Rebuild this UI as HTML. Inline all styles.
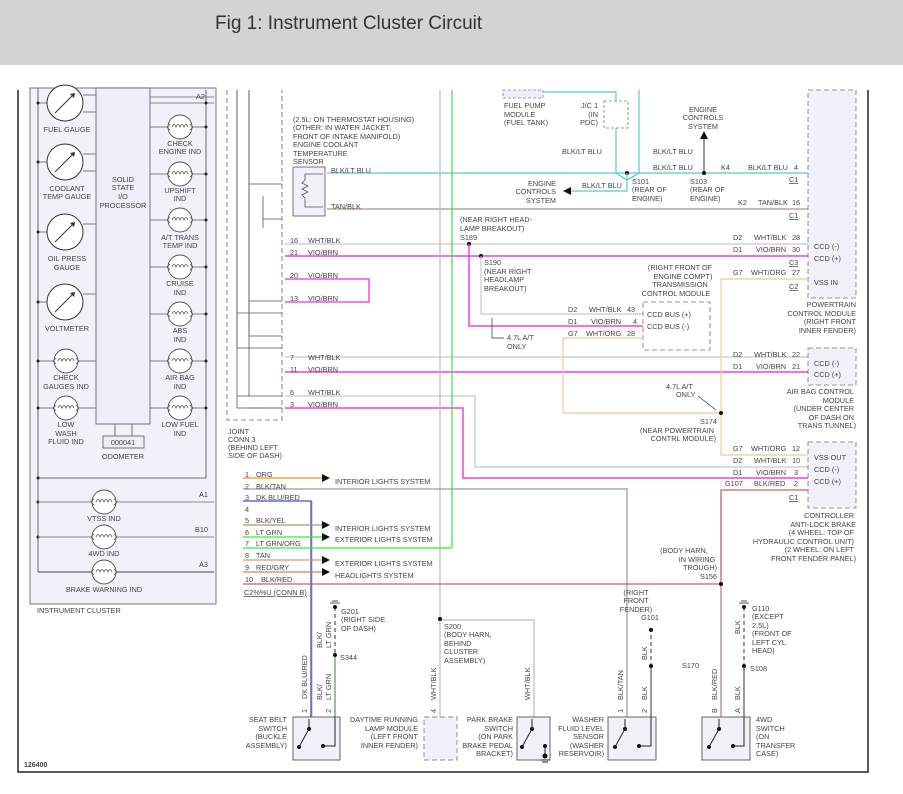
<!DOCTYPE html>
<html><head><meta charset="utf-8"><style>
body{margin:0;background:#fff;width:903px;height:794px;overflow:hidden;font-family:"Liberation Sans",sans-serif}
.hdr{position:absolute;left:0;top:0;width:903px;height:65px;background:#d3d3d3}
.hdr span{position:absolute;left:215px;top:13px;font-size:19px;color:#333}
svg{position:absolute;left:0;top:0}
text{font-family:"Liberation Sans",sans-serif;font-size:7.3px;fill:#444}
</style></head><body>
<div class="hdr"><span>Fig 1: Instrument Cluster Circuit</span></div>
<svg width="903" height="794" viewBox="0 0 903 794">
<defs>
<g id="lamp"><circle r="12" fill="#fff" stroke="#555" stroke-width="0.9"/><path d="M-8,0 q2,-5 4,0 q2,-5 4,0 q2,-5 4,0 q2,-5 4,0 M-10,-3 l-3,3 l3,3 M10,-3 l3,3 l-3,3" fill="none" stroke="#555" stroke-width="0.8"/></g>
<g id="gauge"><circle r="18" fill="#fff" stroke="#333" stroke-width="1"/><path d="M-10,10 L9,-9" stroke="#333" stroke-width="1"/><path d="M10,-10 l-5,1 l4,4z" fill="#333"/></g>
<g id="sw"><circle cx="-12" cy="14" r="2" fill="#111"/><circle cx="-2" cy="-4" r="2" fill="#111"/><path d="M-12,14 L-1,-6 M-2,-4 L-2,-14" stroke="#222" stroke-width="1"/></g>
</defs>
<!-- border -->
<path d="M18,90 V772 H868 V90" fill="none" stroke="#222" stroke-width="1.5"/>
<!-- instrument cluster -->
<rect x="30" y="88" width="186" height="516" fill="#f1f1fa" stroke="#777" stroke-width="1"/>
<path d="M38,88 V478 H206 V90" fill="none" stroke="#444" stroke-width="0.8"/>
<path d="M38,478 V572" fill="none" stroke="#444" stroke-width="0.8"/>
<rect x="96" y="88" width="54" height="336" fill="#eeeefa" stroke="#555" stroke-width="0.8"/>
<text x="123" y="182" text-anchor="middle">SOLID</text><text x="123" y="190" text-anchor="middle">STATE</text><text x="123" y="199" text-anchor="middle">I/O</text><text x="123" y="208" text-anchor="middle">PROCESSOR</text>
<path d="M150,97 H214 M150,103 H214" stroke="#666" stroke-width="0.8"/><text x="196" y="99">A2</text>
<path d="M115,424 V436 M132,424 V436" stroke="#555" stroke-width="0.8"/>
<rect x="103" y="436" width="41" height="12" fill="#eeeefa" stroke="#555" stroke-width="0.8"/><text x="123" y="445" text-anchor="middle">000041</text>
<text x="123" y="459" text-anchor="middle">ODOMETER</text>
<g stroke="#555" stroke-width="0.8">
<path d="M38,103 H47 M83,95 H96 M83,112 H96 M38,162 H47 M83,154 H96 M83,171 H96 M38,232 H47 M83,224 H96 M38,302 H47 M83,294 H96 M38,361 H96 M38,408 H96"/>
<path d="M150,127 H206 M150,174 H206 M150,220 H206 M150,267 H206 M150,314 H206 M150,361 H206 M150,408 H206"/>
</g>
<g fill="#222"><circle cx="38" cy="103" r="1.5"/><circle cx="38" cy="162" r="1.5"/><circle cx="38" cy="232" r="1.5"/><circle cx="38" cy="302" r="1.5"/><circle cx="38" cy="361" r="1.5"/><circle cx="38" cy="408" r="1.5"/><circle cx="38" cy="478" r="1.5"/><circle cx="38" cy="502" r="1.5"/><circle cx="38" cy="537" r="1.5"/>
<circle cx="206" cy="103" r="1.5"/><circle cx="206" cy="127" r="1.5"/><circle cx="206" cy="174" r="1.5"/><circle cx="206" cy="220" r="1.5"/><circle cx="206" cy="267" r="1.5"/><circle cx="206" cy="314" r="1.5"/><circle cx="206" cy="361" r="1.5"/><circle cx="206" cy="408" r="1.5"/></g>
<use href="#gauge" x="65" y="103"/><use href="#gauge" x="65" y="162"/><use href="#gauge" x="65" y="232"/><use href="#gauge" x="65" y="302"/>
<text x="67" y="132" text-anchor="middle">FUEL GAUGE</text>
<text x="67" y="191" text-anchor="middle">COOLANT</text><text x="67" y="199" text-anchor="middle">TEMP GAUGE</text>
<text x="67" y="261" text-anchor="middle">OIL PRESS</text><text x="67" y="270" text-anchor="middle">GAUGE</text>
<text x="67" y="331" text-anchor="middle">VOLTMETER</text>
<use href="#lamp" x="66" y="361"/><use href="#lamp" x="66" y="408"/>
<text x="66" y="380" text-anchor="middle">CHECK</text><text x="66" y="389" text-anchor="middle">GAUGES IND</text>
<text x="66" y="427" text-anchor="middle">LOW</text><text x="66" y="436" text-anchor="middle">WASH</text><text x="66" y="444" text-anchor="middle">FLUID IND</text>
<use href="#lamp" x="180" y="127"/><use href="#lamp" x="180" y="174"/><use href="#lamp" x="180" y="220"/><use href="#lamp" x="180" y="267"/><use href="#lamp" x="180" y="314"/><use href="#lamp" x="180" y="361"/><use href="#lamp" x="180" y="408"/>
<g text-anchor="middle"><text x="180" y="146">CHECK</text><text x="180" y="154">ENGINE IND</text>
<text x="180" y="193">UPSHIFT</text><text x="180" y="201">IND</text>
<text x="180" y="240">A/T TRANS</text><text x="180" y="248">TEMP IND</text>
<text x="180" y="286">CRUISE</text><text x="180" y="295">IND</text>
<text x="180" y="333">ABS</text><text x="180" y="342">IND</text>
<text x="180" y="380">AIR BAG</text><text x="180" y="389">IND</text>
<text x="180" y="427">LOW FUEL</text><text x="180" y="436">IND</text></g>
<g stroke="#888" stroke-width="0.9"><path d="M38,502 H214 M38,537 H214"/></g><path d="M38,572 H214" stroke="#444" stroke-width="0.9"/>
<use href="#lamp" x="104" y="502"/><use href="#lamp" x="104" y="537"/><use href="#lamp" x="104" y="572"/>
<text x="104" y="521" text-anchor="middle">VTSS IND</text><text x="104" y="556" text-anchor="middle">4WD IND</text><text x="104" y="592" text-anchor="middle">BRAKE WARNING IND</text>
<text x="199" y="497">A1</text><text x="195" y="532">B10</text><text x="199" y="567">A3</text>
<text x="37" y="613">INSTRUMENT CLUSTER</text>
<text x="24" y="767" style="font-weight:bold;font-size:7px">126400</text>
<!-- joint conn -->
<path d="M227,90 V420 H282 V90" fill="none" stroke="#666" stroke-dasharray="5,3" stroke-width="0.8"/>
<path d="M237,90 V348 H282 M249,90 V336 H282 M237,313 H282 M249,184 H282 M249,301 H282 M263,196 V228 M263,219 H282 M249,408 H282 M237,396 H282 M249,396" fill="none" stroke="#555" stroke-width="0.8"/>
<path d="M237,90 V408 H282 M249,90 V396" fill="none" stroke="#555" stroke-width="0.8"/>
<text x="228" y="434">JOINT</text><text x="228" y="442">CONN 3</text><text x="228" y="450">(BEHIND LEFT</text><text x="228" y="458">SIDE OF DASH)</text>
<!-- sensor -->
<text x="293" y="122">(2.5L: ON THERMOSTAT HOUSING)</text><text x="293" y="130">(OTHER: IN WATER JACKET,</text><text x="293" y="139">FRONT OF INTAKE MANIFOLD)</text><text x="293" y="147">ENGINE COOLANT</text><text x="293" y="156">TEMPERATURE</text><text x="293" y="164">SENSOR</text>
<rect x="293" y="167" width="32" height="49" fill="#f1f1fa" stroke="#555" stroke-width="0.8"/>
<path d="M323,174 H305 V180 l-3,3 l6,3 l-6,3 l6,3 l-6,3 l3,3 V207 H323" fill="none" stroke="#555" stroke-width="0.8"/>
<!-- main wires -->
<path d="M327,173 H627 M627,173 H808" stroke="#5cc8cc" stroke-width="1.2" fill="none"/>
<path d="M327,209 H808" stroke="#a89878" stroke-width="1.2"/>
<text x="331" y="173">BLK/LT BLU</text><text x="331" y="209">TAN/BLK</text>
<path d="M285,244 H808" stroke="#c8c8c8" stroke-width="1.2"/>
<path d="M285,256 H808" stroke="#f040e0" stroke-width="1.5"/>
<path d="M285,279 H369 V302 H285" fill="none" stroke="#f050e0" stroke-width="1.5"/>
<path d="M285,357 H808" stroke="#c8c8c8" stroke-width="1.2"/>
<path d="M285,372 H808" stroke="#f040e0" stroke-width="1.5"/>
<path d="M285,396 H475 V467 H808" fill="none" stroke="#c8c8c8" stroke-width="1.2"/>
<path d="M285,408 H463 V478 H808" fill="none" stroke="#f040e0" stroke-width="1.5"/>
<g>
<text x="290" y="243">16</text><text x="308" y="243">WHT/BLK</text><text x="290" y="255">21</text><text x="308" y="255">VIO/BRN</text>
<text x="290" y="278">20</text><text x="308" y="278">VIO/BRN</text><text x="290" y="301">13</text><text x="308" y="301">VIO/BRN</text>
<text x="290" y="360">7</text><text x="308" y="360">WHT/BLK</text><text x="290" y="372">11</text><text x="308" y="372">VIO/BRN</text>
<text x="290" y="395">6</text><text x="308" y="395">WHT/BLK</text><text x="290" y="407">3</text><text x="308" y="407">VIO/BRN</text></g>
<!-- verticals -->
<path d="M440,90 V620 M440,620 H534 V717 M440,620 V717" fill="none" stroke="#bbb" stroke-width="1.2"/>
<path d="M452,90 V548" stroke="#44dd44" stroke-width="1.2"/>
<!-- top right -->
<rect x="503" y="90" width="40" height="8" fill="#eeeefa" stroke="#888" stroke-dasharray="3,2" stroke-width="0.8"/>
<text x="504" y="108">FUEL PUMP</text><text x="504" y="117">MODULE</text><text x="504" y="125">(FUEL TANK)</text>
<path d="M543,92 H616 V173 L627,180 L639,173 V90" fill="none" stroke="#5cc8cc" stroke-width="1.2"/>
<rect x="604" y="101" width="24" height="27" fill="#fff" stroke="#777" stroke-dasharray="3,2" stroke-width="0.8"/>
<text x="598" y="108" text-anchor="end">J/C 1</text><text x="598" y="117" text-anchor="end">(IN</text><text x="598" y="125" text-anchor="end">PDC)</text>
<text x="562" y="154">BLK/LT BLU</text><text x="653" y="154">BLK/LT BLU</text><text x="653" y="170">BLK/LT BLU</text>
<text x="721" y="170">K4</text><text x="748" y="170">BLK/LT BLU</text><text x="794" y="170">4</text>
<text x="789" y="182" text-decoration="underline">C1</text><text x="814" y="179">SENS GND</text>
<path d="M704,173 V135" stroke="#333" stroke-width="1"/><path d="M704,131 l-4,8 h8z" fill="#111"/>
<text x="703" y="112" text-anchor="middle">ENGINE</text><text x="703" y="120" text-anchor="middle">CONTROLS</text><text x="703" y="129" text-anchor="middle">SYSTEM</text>
<circle cx="627" cy="173" r="2" fill="#111"/><circle cx="704" cy="173" r="2" fill="#111"/>
<path d="M627,173 V191 H570" fill="none" stroke="#5cc8cc" stroke-width="1.2"/><path d="M563,191 l8,-4 v8z" fill="#111"/>
<text x="582" y="188">BLK/LT BLU</text>
<text x="556" y="186" text-anchor="end">ENGINE</text><text x="556" y="194" text-anchor="end">CONTROLS</text><text x="556" y="203" text-anchor="end">SYSTEM</text>
<text x="632" y="184">S101</text><text x="632" y="192">(REAR OF</text><text x="632" y="201">ENGINE)</text>
<text x="690" y="184">S103</text><text x="690" y="192">(REAR OF</text><text x="690" y="201">ENGINE)</text>
<text x="738" y="205">K2</text><text x="758" y="205">TAN/BLK</text><text x="792" y="205">16</text>
<text x="789" y="218" text-decoration="underline">C1</text><text x="814" y="214">ECT</text>
<!-- PCM -->
<rect x="808" y="90" width="48" height="208" fill="#f1f1fa" stroke="#777" stroke-dasharray="5,3" stroke-width="0.8"/>
<text x="733" y="240">D2</text><text x="754" y="240">WHT/BLK</text><text x="792" y="240">28</text>
<text x="733" y="252">D1</text><text x="756" y="252">VIO/BRN</text><text x="792" y="252">30</text>
<text x="789" y="265" text-decoration="underline">C3</text>
<text x="814" y="249">CCD (-)</text><text x="814" y="261">CCD (+)</text>
<text x="733" y="275">G7</text><text x="751" y="275">WHT/ORG</text><text x="792" y="275">27</text>
<text x="789" y="289" text-decoration="underline">C2</text><text x="814" y="285">VSS IN</text>
<g text-anchor="end"><text x="856" y="307">POWERTRAIN</text><text x="856" y="316">CONTROL MODULE</text><text x="856" y="324">(RIGHT FRONT</text><text x="856" y="333">INNER FENDER)</text></g>
<path d="M808,279 H721 V455 H808" fill="none" stroke="#f5c89a" stroke-width="1.2"/>
<!-- S189 S190 -->
<text x="460" y="222">(NEAR RIGHT HEAD-</text><text x="460" y="231">LAMP BREAKOUT)</text><text x="460" y="240">S189</text>
<circle cx="469" cy="244" r="2" fill="#111"/><circle cx="481" cy="256" r="2" fill="#111"/>
<path d="M469,244 V326 H643" fill="none" stroke="#f040e0" stroke-width="1.5"/>
<path d="M481,256 V314 H643" fill="none" stroke="#c8c8c8" stroke-width="1.2"/>
<text x="484" y="265">S190</text><text x="484" y="274">(NEAR RIGHT</text><text x="484" y="282">HEADLAMP</text><text x="484" y="291">BREAKOUT)</text>
<path d="M492,318 V338 H504" fill="none" stroke="#333" stroke-width="0.7"/><text x="507" y="340">4.7L A/T</text><text x="507" y="349">ONLY</text>
<rect x="643" y="302" width="67" height="48" fill="#fff" stroke="#777" stroke-dasharray="5,3" stroke-width="0.8"/>
<text x="647" y="317">CCD BUS (+)</text><text x="647" y="329">CCD BUS (-)</text>
<g text-anchor="middle"><text x="680" y="270">(RIGHT FRONT OF</text><text x="683" y="279">ENGINE COMPT)</text><text x="680" y="287">TRANSMISSION</text><text x="676" y="296">CONTROL MODULE</text></g>
<text x="568" y="312">D2</text><text x="589" y="312">WHT/BLK</text><text x="627" y="312">43</text>
<text x="568" y="324">D1</text><text x="591" y="324">VIO/BRN</text><text x="633" y="324">4</text>
<text x="568" y="336">G7</text><text x="586" y="336">WHT/ORG</text><text x="627" y="336">28</text>
<path d="M643,338 H563 V413 H721" fill="none" stroke="#f5c89a" stroke-width="1.2"/>
<circle cx="721" cy="413" r="2" fill="#111"/>
<path d="M698,396 L716,410" stroke="#333" stroke-width="0.7"/>
<text x="666" y="389">4.7L A/T</text><text x="676" y="397">ONLY</text>
<g text-anchor="end"><text x="717" y="424">S174</text><text x="714" y="433">(NEAR POWERTRAIN</text><text x="716" y="441">CONTRL MODULE)</text></g>
<!-- airbag -->
<rect x="808" y="348" width="48" height="37" fill="#f1f1fa" stroke="#777" stroke-dasharray="5,3" stroke-width="0.8"/>
<text x="733" y="357">D2</text><text x="754" y="357">WHT/BLK</text><text x="792" y="357">22</text>
<text x="733" y="369">D1</text><text x="756" y="369">VIO/BRN</text><text x="792" y="369">21</text>
<text x="814" y="366">CCD (-)</text><text x="814" y="377">CCD (+)</text>
<g text-anchor="end"><text x="854" y="394">AIR BAG CONTROL</text><text x="854" y="403">MODULE</text><text x="854" y="411">(UNDER CENTER</text><text x="854" y="420">OF DASH ON</text><text x="856" y="428">TRANS TUNNEL)</text></g>
<!-- ABS -->
<rect x="808" y="442" width="48" height="66" fill="#f1f1fa" stroke="#777" stroke-dasharray="5,3" stroke-width="0.8"/>
<text x="733" y="451">G7</text><text x="751" y="451">WHT/ORG</text><text x="792" y="451">12</text>
<text x="733" y="463">D2</text><text x="754" y="463">WHT/BLK</text><text x="792" y="463">10</text>
<text x="733" y="475">D1</text><text x="756" y="475">VIO/BRN</text><text x="794" y="475">3</text>
<text x="725" y="486">G107</text><text x="754" y="486">BLK/RED</text><text x="794" y="486">2</text>
<text x="789" y="500" text-decoration="underline">C1</text>
<text x="814" y="460">VSS OUT</text><text x="814" y="472">CCD (-)</text><text x="814" y="484">CCD (+)</text>
<g text-anchor="end"><text x="854" y="518">CONTROLLER</text><text x="856" y="527">ANTI-LOCK BRAKE</text><text x="854" y="535">(4 WHEEL: TOP OF</text><text x="854" y="544">HYDRAULIC CONTROL UNIT)</text><text x="854" y="552">(2 WHEEL: ON LEFT</text><text x="856" y="561">FRONT FENDER PANEL)</text></g>
<!-- conn B wires -->
<path d="M243,478 H322" stroke="#ff8c1a" stroke-width="1.3"/>
<path d="M243,489 H627 V717" fill="none" stroke="#999" stroke-width="1.2"/>
<path d="M243,501 H311 V717" fill="none" stroke="#4050c0" stroke-width="1.3"/><path d="M312,501 V717" stroke="#c06060" stroke-width="0.6"/>
<path d="M243,525 H322" stroke="#a89868" stroke-width="1.2"/>
<path d="M243,537 H322" stroke="#33ee33" stroke-width="1.3"/>
<path d="M243,548 H452" stroke="#33ee33" stroke-width="1.3"/>
<path d="M243,560 H322" stroke="#c8a060" stroke-width="1.2"/>
<path d="M243,572 H322" stroke="#f07070" stroke-width="1.3"/>
<path d="M243,584 H721 M721,584 V490 H808 M721,584 V717" fill="none" stroke="#c86060" stroke-width="1.3"/>
<path d="M721,584 V717" stroke="#999" stroke-width="1"/>
<g fill="#111"><path d="M322,474 l8,4 l-8,4z M322,521 l8,4 l-8,4z M322,533 l8,4 l-8,4z M322,556 l8,4 l-8,4z M322,568 l8,4 l-8,4z"/><circle cx="721" cy="584" r="2"/></g>
<text x="245" y="477">1</text><text x="256" y="477">ORG</text><text x="245" y="489">2</text><text x="256" y="489">BLK/TAN</text>
<text x="245" y="500">3</text><text x="256" y="500">DK BLU/RED</text><text x="245" y="512">4</text>
<text x="245" y="523">5</text><text x="256" y="523">BLK/YEL</text><text x="245" y="535">6</text><text x="256" y="535">LT GRN</text>
<text x="245" y="546">7</text><text x="256" y="546">LT GRN/ORG</text><text x="245" y="558">8</text><text x="256" y="558">TAN</text>
<text x="245" y="570">9</text><text x="256" y="570">RED/GRY</text><text x="245" y="582">10</text><text x="261" y="582">BLK/RED</text>
<text x="244" y="595" text-decoration="underline">C2%%U (CONN B)</text>
<text x="335" y="484">INTERIOR LIGHTS SYSTEM</text><text x="335" y="531">INTERIOR LIGHTS SYSTEM</text><text x="335" y="542">EXTERIOR LIGHTS SYSTEM</text><text x="335" y="566">EXTERIOR LIGHTS SYSTEM</text><text x="335" y="578">HEADLIGHTS SYSTEM</text>
<text x="684" y="553" text-anchor="middle">(BODY HARN,</text><text x="697" y="562" text-anchor="middle">IN WIRING</text><text x="700" y="570" text-anchor="middle">TROUGH)</text><text x="717" y="579" text-anchor="end">S156</text>
<!-- grounds -->
<path d="M335,607 V655" stroke="#555" stroke-width="1.2" stroke-dasharray="4,3"/><path d="M335,655 V717" stroke="#559955" stroke-width="1.2"/>
<circle cx="335" cy="607" r="2" fill="#111"/><circle cx="335" cy="655" r="2" fill="#111"/><path d="M330,603 h10 M332,601 h6" stroke="#555"/>
<text x="341" y="614">G201</text><text x="341" y="622">(RIGHT SIDE</text><text x="341" y="631">OF DASH)</text><text x="340" y="660">S344</text>
<circle cx="440" cy="619" r="2" fill="#111"/>
<text x="444" y="629">S200</text><text x="444" y="637">(BODY HARN,</text><text x="444" y="646">BEHIND</text><text x="444" y="654">CLUSTER</text><text x="444" y="663">ASSEMBLY)</text>
<text x="636" y="595" text-anchor="middle">(RIGHT</text><text x="636" y="603" text-anchor="middle">FRONT</text><text x="636" y="612" text-anchor="middle">FENDER)</text><text x="650" y="620" text-anchor="middle">G101</text>
<path d="M651,628 V666" stroke="#555" stroke-width="1.2" stroke-dasharray="4,3"/><path d="M651,666 V717" stroke="#555" stroke-width="1.2"/>
<circle cx="651" cy="630" r="2" fill="#111"/><circle cx="651" cy="666" r="2" fill="#111"/>
<text x="682" y="668">S170</text>
<path d="M744,607 V666" stroke="#555" stroke-width="1.2" stroke-dasharray="4,3"/><path d="M744,666 V717" stroke="#555" stroke-width="1.2"/>
<circle cx="744" cy="607" r="2" fill="#111"/><circle cx="744" cy="666" r="2" fill="#111"/><path d="M739,603 h10 M741,601 h6" stroke="#555"/>
<text x="752" y="611">G110</text><text x="752" y="619">(EXCEPT</text><text x="752" y="628">2.5L)</text><text x="752" y="636">(FRONT OF</text><text x="752" y="645">LEFT CYL</text><text x="752" y="653">HEAD)</text><text x="750" y="671">S108</text>
<!-- vertical labels -->
<g>
<text transform="translate(307,699) rotate(-90)">DK BLU/RED</text>
<text transform="translate(322,648) rotate(-90)">BLK/</text><text transform="translate(331,648) rotate(-90)">LT GRN</text>
<text transform="translate(322,700) rotate(-90)">BLK/</text><text transform="translate(331,700) rotate(-90)">LT GRN</text>
<text transform="translate(436,700) rotate(-90)">WHT/BLK</text>
<text transform="translate(530,700) rotate(-90)">WHT/BLK</text>
<text transform="translate(623,700) rotate(-90)">BLK/TAN</text>
<text transform="translate(647,700) rotate(-90)">BLK</text><text transform="translate(647,660) rotate(-90)">BLK</text>
<text transform="translate(717,700) rotate(-90)">BLK/RED</text>
<text transform="translate(740,700) rotate(-90)">BLK</text><text transform="translate(740,634) rotate(-90)">BLK</text>
<text transform="translate(307,713) rotate(-90)">1</text><text transform="translate(331,713) rotate(-90)">2</text><text transform="translate(436,713) rotate(-90)">4</text>
<text transform="translate(623,713) rotate(-90)">1</text><text transform="translate(647,713) rotate(-90)">2</text><text transform="translate(717,713) rotate(-90)">B</text><text transform="translate(740,713) rotate(-90)">A</text>
</g>
<!-- switches -->
<rect x="293" y="717" width="47" height="43" fill="#f1f1fa" stroke="#555" stroke-width="0.9"/>
<use href="#sw" x="311" y="733"/><path d="M335,717 V746 H323" fill="none" stroke="#222"/><circle cx="323" cy="746" r="2" fill="#111"/>
<g text-anchor="end"><text x="287" y="722">SEAT BELT</text><text x="287" y="731">SWITCH</text><text x="287" y="739">(BUCKLE</text><text x="287" y="748">ASSEMBLY)</text>
<text x="418" y="722">DAYTIME RUNNING</text><text x="418" y="731">LAMP MODULE</text><text x="418" y="739">(LEFT FRONT</text><text x="418" y="748">INNER FENDER)</text>
<text x="513" y="722">PARK BRAKE</text><text x="513" y="731">SWITCH</text><text x="513" y="739">(ON PARK</text><text x="513" y="748">BRAKE PEDAL</text><text x="513" y="756">BRACKET)</text>
<text x="604" y="722">WASHER</text><text x="604" y="731">FLUID LEVEL</text><text x="604" y="739">SENSOR</text><text x="604" y="748">(WASHER</text><text x="604" y="756">RESERVOIR)</text></g>
<rect x="424" y="717" width="33" height="43" fill="#f1f1fa" stroke="#888" stroke-dasharray="5,3" stroke-width="0.9"/>
<rect x="517" y="717" width="33" height="43" fill="#f1f1fa" stroke="#555" stroke-width="0.9"/>
<use href="#sw" x="534" y="733"/><path d="M545,745 V757 M540,760 h10 M542,762 h6" stroke="#222"/><circle cx="545" cy="746" r="2" fill="#111"/><circle cx="545" cy="756" r="2.5" fill="#111"/>
<rect x="608" y="717" width="48" height="43" fill="#f1f1fa" stroke="#555" stroke-width="0.9"/>
<use href="#sw" x="627" y="733"/><path d="M651,717 V746 H639" fill="none" stroke="#222"/><circle cx="639" cy="746" r="2" fill="#111"/>
<rect x="702" y="717" width="48" height="43" fill="#f1f1fa" stroke="#555" stroke-width="0.9"/>
<use href="#sw" x="721" y="733"/><path d="M744,717 V746 H733" fill="none" stroke="#222"/><circle cx="733" cy="746" r="2" fill="#111"/>
<text x="756" y="722">4WD</text><text x="756" y="731">SWITCH</text><text x="756" y="739">(ON</text><text x="756" y="748">TRANSFER</text><text x="756" y="756">CASE)</text>
</svg>
</body></html>
